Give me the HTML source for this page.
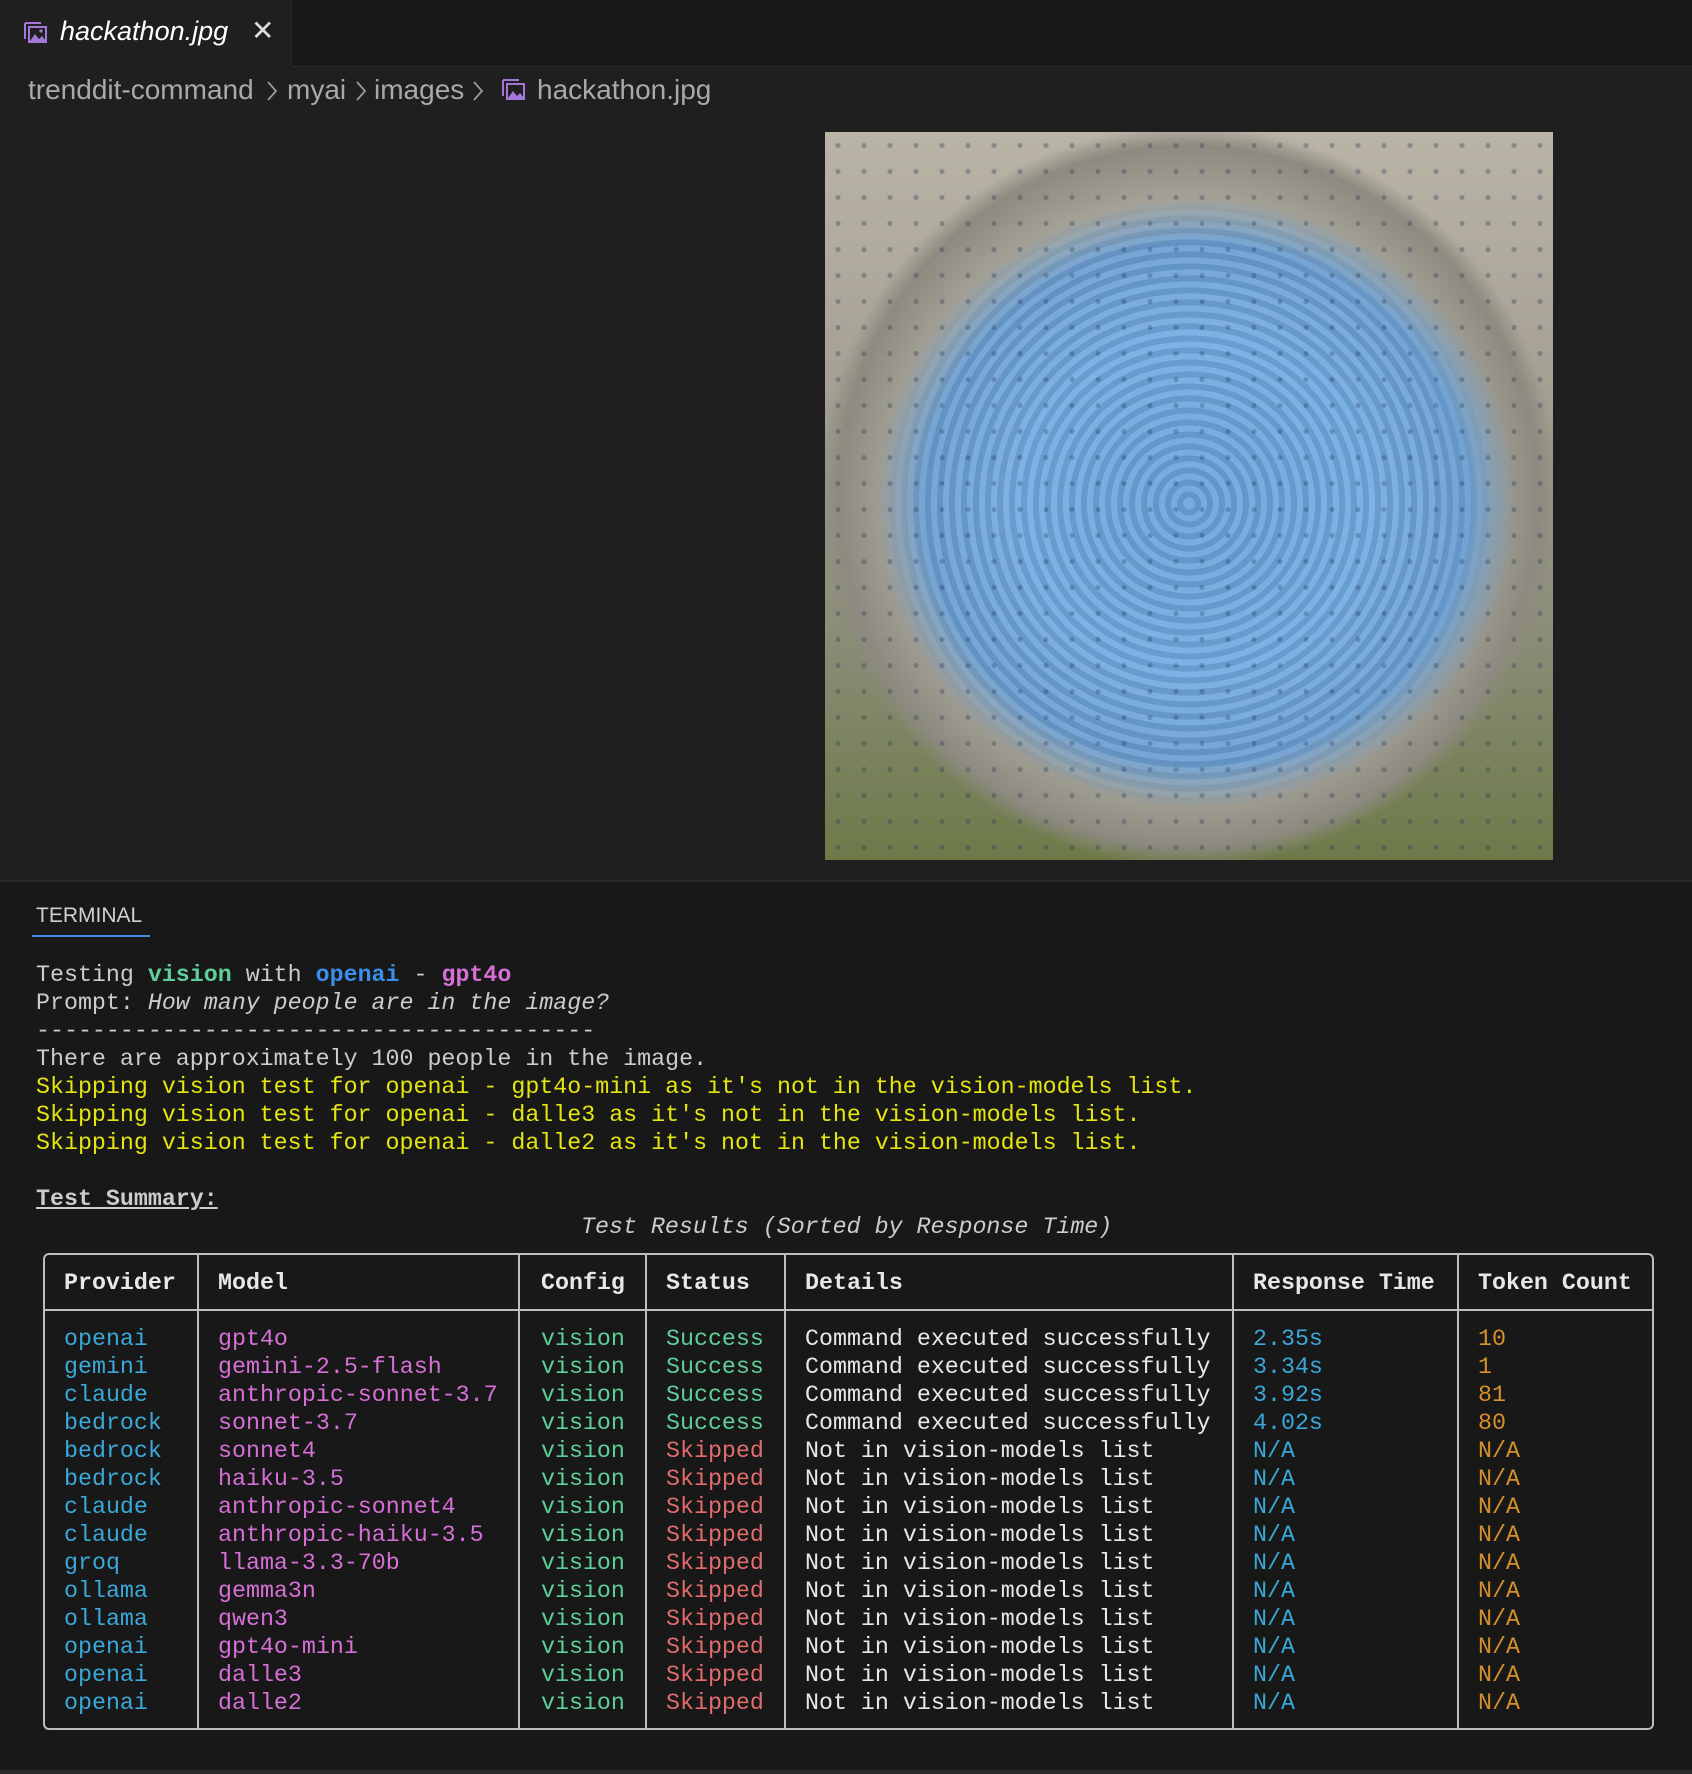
<!DOCTYPE html>
<html><head><meta charset="utf-8"><style>
*{margin:0;padding:0;box-sizing:border-box}
body{width:1692px;height:1774px;background:#181818;position:relative;overflow:hidden;font-family:"Liberation Sans",sans-serif}
.tabbar{position:absolute;left:0;top:0;width:1692px;height:67px;background:#181818;border-bottom:1px solid #2b2b2b}
.tab{position:absolute;left:0;top:0;width:292px;height:67px;background:#1f1f1f;border-right:1px solid #2b2b2b}
.editor{position:absolute;left:0;top:67px;width:1692px;height:813px;background:#1f1f1f}
.t{position:absolute;white-space:pre;}
.bc{position:absolute;top:74px;font-size:28px;color:#a9a9a9;white-space:pre}
.mono{font-family:"Liberation Mono",monospace;font-size:23.3px;line-height:28px;color:#cccccc}
.photo{position:absolute;left:825px;top:132px;width:728px;height:728px;overflow:hidden;
background:
radial-gradient(circle at 50% 52%, rgba(40,60,90,.35) 0 2px, rgba(0,0,0,0) 3px) 0 0/26px 26px,
radial-gradient(ellipse 44% 42% at 51% 51%, #6aa4dc 0%, #74ace2 55%, #6b9fd2 85%, rgba(120,140,150,0) 100%),
radial-gradient(circle at 50% 50%, #9a9a92 0%, #aaa79c 55%, #8d8a80 68%, rgba(0,0,0,0) 72%),
linear-gradient(180deg,#b9b4a6 0%,#a8a396 30%,#8a8c76 70%,#6d7a48 100%);}
.photo:after{content:"";position:absolute;left:8%;top:10%;width:84%;height:82%;border-radius:50%;
background:radial-gradient(circle, rgba(0,0,0,0) 60%, rgba(0,0,0,0) 100%),
repeating-radial-gradient(circle at 50% 50%, rgba(255,255,255,.08) 0 6px, rgba(30,50,80,.12) 6px 12px);
-webkit-mask:radial-gradient(circle, #000 60%, transparent 72%);mask:radial-gradient(circle, #000 60%, transparent 72%)}
.panel{position:absolute;left:0;top:880px;width:1692px;height:894px;background:#181818;border-top:2px solid #2b2b2b}
.box{position:absolute;left:43px;top:1253px;width:1611px;height:477px;border:2px solid #bdbdbd;border-radius:6px}
.v{position:absolute;top:1253px;height:477px;width:2px;background:#bdbdbd}
.g{color:#5fcf9a}.b{color:#3b8eea}.m{color:#d670d6}.y{color:#e5e510}.c{color:#3aa8d8}.r{color:#e06c6c}.o{color:#d8902a}.w{color:#e8e8e8}
</style></head><body>
<div class="tabbar"></div>
<div class="tab"></div>
<svg style="position:absolute;left:24px;top:22px" width="24" height="22" viewBox="0 0 24 22"><path d="M1 1h16M1 1v16" stroke="#a277d8" stroke-width="2" fill="none"/><rect x="5" y="5" width="17" height="15" fill="none" stroke="#a277d8" stroke-width="2"/><path d="M6 19l5-7 4 5 3-3 4 5z" fill="#a277d8"/><circle cx="17" cy="9" r="1.6" fill="#a277d8"/></svg>
<div class="t" style="left:60px;top:16px;font-size:27px;font-style:italic;color:#ffffff">hackathon.jpg</div>
<div class="t" style="left:251px;top:14px;font-size:28px;color:#ddd">✕</div>
<div class="editor"></div>
<div class="bc" style="left:28px">trenddit-command</div>
<svg style="position:absolute;left:266px;top:80px" width="12" height="22"><path d="M2 2l8 9-8 9" stroke="#9a9a9a" stroke-width="1.8" fill="none"/></svg>
<div class="bc" style="left:287px">myai</div>
<svg style="position:absolute;left:355px;top:80px" width="12" height="22"><path d="M2 2l8 9-8 9" stroke="#9a9a9a" stroke-width="1.8" fill="none"/></svg>
<div class="bc" style="left:374px">images</div>
<svg style="position:absolute;left:472px;top:80px" width="12" height="22"><path d="M2 2l8 9-8 9" stroke="#9a9a9a" stroke-width="1.8" fill="none"/></svg>
<svg style="position:absolute;left:502px;top:79px" width="24" height="22" viewBox="0 0 24 22"><path d="M1 1h16M1 1v16" stroke="#a277d8" stroke-width="2" fill="none"/><rect x="5" y="5" width="17" height="15" fill="none" stroke="#a277d8" stroke-width="2"/><path d="M6 19l5-7 4 5 3-3 4 5z" fill="#a277d8"/></svg>
<div class="bc" style="left:537px">hackathon.jpg</div>
<div class="photo"></div>
<div class="panel"></div>
<div class="t" style="left:36px;top:904px;font-size:21px;color:#d0d0d0">TERMINAL</div>
<div style="position:absolute;left:32px;top:935px;width:118px;height:2px;background:#3b8eea"></div>

<div class="t mono" style="left:36px;top:961px">Testing <b class="g">vision</b> with <b class="b">openai</b> - <b class="m">gpt4o</b></div>
<div class="t mono" style="left:36px;top:989px">Prompt: <i>How many people are in the image?</i></div>
<div class="t mono" style="left:36px;top:1017px">----------------------------------------</div>
<div class="t mono" style="left:36px;top:1045px">There are approximately 100 people in the image.</div>
<div class="t mono y" style="left:36px;top:1073px">Skipping vision test for openai - gpt4o-mini as it's not in the vision-models list.</div>
<div class="t mono y" style="left:36px;top:1101px">Skipping vision test for openai - dalle3 as it's not in the vision-models list.</div>
<div class="t mono y" style="left:36px;top:1129px">Skipping vision test for openai - dalle2 as it's not in the vision-models list.</div>
<div class="t mono" style="left:36px;top:1185px;font-weight:bold;text-decoration:underline">Test Summary:</div>
<div class="t mono" style="left:581px;top:1213px;font-style:italic">Test Results (Sorted by Response Time)</div>

<div class="box"></div>
<div style="position:absolute;left:43px;top:1309px;width:1611px;height:2px;background:#bdbdbd"></div>
<div class="v" style="left:197px"></div><div class="v" style="left:518px"></div><div class="v" style="left:645px"></div><div class="v" style="left:784px"></div><div class="v" style="left:1232px"></div><div class="v" style="left:1457px"></div>

<div class="t mono w" style="top:1269px;left:64px;font-weight:bold">Provider</div>
<div class="t mono w" style="top:1269px;left:218px;font-weight:bold">Model</div>
<div class="t mono w" style="top:1269px;left:541px;font-weight:bold">Config</div>
<div class="t mono w" style="top:1269px;left:666px;font-weight:bold">Status</div>
<div class="t mono w" style="top:1269px;left:805px;font-weight:bold">Details</div>
<div class="t mono w" style="top:1269px;left:1253px;font-weight:bold">Response Time</div>
<div class="t mono w" style="top:1269px;left:1478px;font-weight:bold">Token Count</div>

<div class="t mono c" style="top:1325px;left:64px">openai
gemini
claude
bedrock
bedrock
bedrock
claude
claude
groq
ollama
ollama
openai
openai
openai</div>
<div class="t mono m" style="top:1325px;left:218px">gpt4o
gemini-2.5-flash
anthropic-sonnet-3.7
sonnet-3.7
sonnet4
haiku-3.5
anthropic-sonnet4
anthropic-haiku-3.5
llama-3.3-70b
gemma3n
qwen3
gpt4o-mini
dalle3
dalle2</div>
<div class="t mono g" style="top:1325px;left:541px">vision
vision
vision
vision
vision
vision
vision
vision
vision
vision
vision
vision
vision
vision</div>
<div class="t mono" style="top:1325px;left:666px"><span class="g">Success
Success
Success
Success</span>
<span class="r">Skipped
Skipped
Skipped
Skipped
Skipped
Skipped
Skipped
Skipped
Skipped
Skipped</span></div>
<div class="t mono w" style="top:1325px;left:805px">Command executed successfully
Command executed successfully
Command executed successfully
Command executed successfully
Not in vision-models list
Not in vision-models list
Not in vision-models list
Not in vision-models list
Not in vision-models list
Not in vision-models list
Not in vision-models list
Not in vision-models list
Not in vision-models list
Not in vision-models list</div>
<div class="t mono c" style="top:1325px;left:1253px">2.35s
3.34s
3.92s
4.02s
N/A
N/A
N/A
N/A
N/A
N/A
N/A
N/A
N/A
N/A</div>
<div class="t mono o" style="top:1325px;left:1478px">10
1
81
80
N/A
N/A
N/A
N/A
N/A
N/A
N/A
N/A
N/A
N/A</div>
<div style="position:absolute;left:0;top:1770px;width:1692px;height:4px;background:#2a2a2a"></div>
</body></html>
